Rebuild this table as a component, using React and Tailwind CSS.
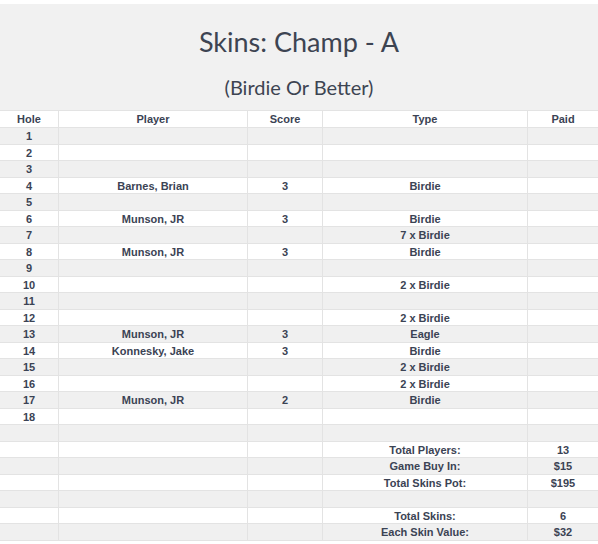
const rows = [
  { hole: "1" },
  { hole: "2" },
  { hole: "3" },
  { hole: "4", player: "Barnes, Brian", score: "3", type: "Birdie" },
  { hole: "5" },
  { hole: "6", player: "Munson, JR", score: "3", type: "Birdie" },
  { hole: "7", type: "7 x Birdie" },
  { hole: "8", player: "Munson, JR", score: "3", type: "Birdie" },
  { hole: "9" },
  { hole: "10", type: "2 x Birdie" },
  { hole: "11" },
  { hole: "12", type: "2 x Birdie" },
  { hole: "13", player: "Munson, JR", score: "3", type: "Eagle" },
  { hole: "14", player: "Konnesky, Jake", score: "3", type: "Birdie" },
  { hole: "15", type: "2 x Birdie" },
  { hole: "16", type: "2 x Birdie" },
  { hole: "17", player: "Munson, JR", score: "2", type: "Birdie" },
  { hole: "18" },
  {},
  { type: "Total Players:", paid: "13" },
  { type: "Game Buy In:", paid: "$15" },
  { type: "Total Skins Pot:", paid: "$195" },
  {},
  { type: "Total Skins:", paid: "6" },
  { type: "Each Skin Value:", paid: "$32" },
];

const cols = "grid grid-cols-[59px_189px_75px_205px_70px]";
const cell = "flex items-center justify-center border-r border-[#e3e3e3] last:border-r-0";

const Row = ({ r, gray }) => (
  <div className={`${cols} h-[16.5px] border-b border-[#e3e3e3] ${gray ? "bg-[#f0f0f0]" : "bg-white"}`}>
    <div className={cell}>{r.hole}</div>
    <div className={cell}>{r.player}</div>
    <div className={cell}>{r.score}</div>
    <div className={cell}>{r.type}</div>
    <div className={cell}>{r.paid}</div>
  </div>
);

export default function App() {
  return (
    <div className="w-[598px] h-[544px] bg-white pt-[4px] overflow-hidden">
      {/* title block */}
      <div className="bg-[#f1f1f1] h-[107px] flex flex-col items-center text-[#3d4452] font-['Lato',sans-serif] border-b border-[#e3e3e3]">
        <h1 className="text-[27px] font-normal mt-[20px] leading-[36px]">Skins: Champ - A</h1>
        <h2 className="text-[20px] font-normal mt-[14px] leading-[26px]">(Birdie Or Better)</h2>
      </div>

      {/* table */}
      <div className="font-['Liberation_Sans',Arial,sans-serif] font-bold text-[11px] text-[#3b4354]">
        <div className={`${cols} h-[17px] border-b border-[#e3e3e3] bg-white`}>
          <div className={cell}>Hole</div>
          <div className={cell}>Player</div>
          <div className={cell}>Score</div>
          <div className={cell}>Type</div>
          <div className={cell}>Paid</div>
        </div>
        {rows.map((r, i) => (
          <Row key={i} r={r} gray={i % 2 === 0} />
        ))}
      </div>
    </div>
  );
}
